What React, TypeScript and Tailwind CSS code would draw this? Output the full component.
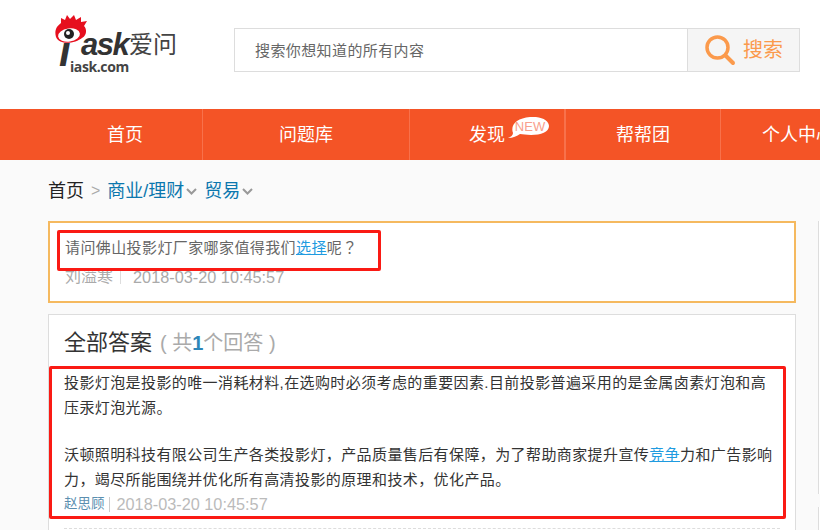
const cjk = "font-['Liberation_Sans','Noto_Sans_CJK_SC',sans-serif]"

const Logo = () => (
  <div className="relative h-[62px] w-[125px] shrink-0">
    <svg width="34" height="30" viewBox="0 0 34 30" className="absolute left-0 top-[1px]">
      <path d="M1 22C-1 15 2 11 6 8L6 3l4 2 2-5 3 4 4-4 2 5 5-3 0 5 6-1-3 5c3 3 3 9-2 12-6 5-22 8-26-1z" fill="#e60f1e" />
      <ellipse cx="14" cy="20" rx="11" ry="6.5" fill="#fff" transform="rotate(-8 14 20)" />
      <circle cx="14" cy="19" r="5" fill="#222" />
      <circle cx="13" cy="18" r="2" fill="#fff" />
    </svg>
    <span className="absolute left-[4px] top-[14px] text-[42px] leading-[48px] font-bold italic text-[#333] font-['Liberation_Sans',sans-serif]">
      ı
    </span>
    <span className="absolute left-[26px] top-[13px] text-[31px] leading-[36px] font-bold italic text-[#333] font-['Liberation_Sans',sans-serif] tracking-[-1.5px]">
      ask
    </span>
    <span className="absolute left-[74px] top-[14px] text-[24px] leading-[30px] text-[#444] font-['Noto_Sans_CJK_SC',sans-serif]">
      爱问
    </span>
    <span className="absolute left-[15px] top-[44px] text-[14px] leading-[18px] font-bold text-[#444] font-['Open_Sans',sans-serif] tracking-[-0.4px]">
      iask.com
    </span>
  </div>
)

const SearchBar = () => (
  <div className="ml-[54px] mt-[14px] flex h-[44px] w-[566px] border border-[#ddd] bg-white">
    <div className="flex-1 pl-[20px] text-[15px] leading-[44px] tracking-[0.4px] text-[#666]">搜索你想知道的所有内容</div>
    <div className="flex w-[112px] items-center border-l border-[#ddd] bg-[#f5f5f5] pl-[16px]">
      <svg width="32" height="32" viewBox="0 0 32 32" fill="none" stroke="#fb9a4c">
        <circle cx="13.5" cy="13.5" r="10.5" strokeWidth="3.5" />
        <path d="M21.5 21.5L29 29" strokeWidth="4" strokeLinecap="round" />
      </svg>
      <span className="ml-[7px] text-[20px] text-[#fb9a4c]">搜索</span>
    </div>
  </div>
)

const Nav = () => (
  <div className="flex h-[51px] bg-[#f45426] pl-[48px] text-[18px] whitespace-nowrap text-white">
    <div className="flex w-[155px] shrink-0 items-center justify-center border-r border-[#f8714b] pt-[2px]">首页</div>
    <div className="flex w-[207px] shrink-0 items-center justify-center border-r border-[#f8714b] pt-[2px]">问题库</div>
    <div className="relative flex w-[156px] shrink-0 items-center justify-center border-r-2 border-[#f8714b] pt-[2px]">
      发现
      <svg width="42" height="23" viewBox="0 0 42 23" className="absolute left-[98px] top-[8px]">
        <path d="M0 21c3-1 5-3 5-5C2 8 9 1 22 0c12-1 19 4 19 9 0 6-8 9-18 9-5 0-8-1-11-1-3 2-7 4-12 4z" fill="#fff" />
        <text x="22" y="14" textAnchor="middle" fontSize="13" fill="#f9a08c" fontFamily="Liberation Sans">NEW</text>
      </svg>
    </div>
    <div className="flex w-[155px] shrink-0 items-center justify-center border-r border-[#f8714b] pt-[2px]">帮帮团</div>
    <div className="flex shrink-0 items-center pl-[41px] pt-[2px]">个人中心</div>
  </div>
)

const Chevron = () => (
  <svg width="11" height="7" viewBox="0 0 11 7" fill="none" stroke="#999" strokeWidth="2" className="mx-[2px] mt-[1px]">
    <path d="M1 1l4.5 4.5L10 1" />
  </svg>
)

export default function App() {
  return (
    <div className={`relative h-[530px] w-[820px] overflow-hidden bg-[#fafafa] ${cjk}`}>
      <div className="flex h-[109px] bg-white pl-[55px] pt-[14px]">
        <Logo />
        <SearchBar />
      </div>
      <Nav />

      <div className="flex h-[61px] items-center pl-[48px] pt-[1px] text-[18px] text-[#0b77ae]">
        <span className="text-[#222]">首页</span>
        <span className="mx-[7px] text-[16px] text-[#aaa]">&gt;</span>
        <span>商业/理财</span>
        <Chevron />
        <span className="ml-[5px]">贸易</span>
        <Chevron />
      </div>

      <div className="ml-[48px] h-[82px] w-[748px] border-2 border-[#f5b95f] bg-white px-[15px] pt-[13px]">
        <p className="text-[15px] leading-[22px] tracking-[0.4px] whitespace-nowrap text-[#666]">
          请问佛山投影灯厂家哪家值得我们<a className="text-[#1f9be0] underline">选择</a>呢<span className="font-['Noto_Sans_CJK_TC',sans-serif]">？</span>
        </p>
        <p className="mt-[7px] flex items-center text-[16.3px] leading-[22px] whitespace-nowrap text-[#aaa]">
          <span className="text-[16px]">刘溢寒</span>
          <span className="mx-[7px] h-[13px] w-px bg-[#ddd]" />
          <span className="ml-[5px]">2018-03-20 10:45:57</span>
        </p>
      </div>

      <div className="ml-[48px] mt-[11px] h-[230px] w-[748px] border border-[#ddd] bg-white px-[15px]">
        <div className="flex h-[55px] items-center pt-[2px] pb-[2px] text-[22px] whitespace-nowrap text-[#333]">
          全部答案
          <span className="ml-[8px] text-[20px] text-[#aaa]">
            ( 共<span className="font-bold text-[#2e86b8]">1</span>个回答 )
          </span>
        </div>
        <div className="text-[15px] leading-[25px] tracking-[0.4px] whitespace-nowrap text-[#333]">
          <p>
            投影灯泡是投影的唯一消耗材料,在选购时必须考虑的重要因素.目前投影普遍采用的是金属卤素灯泡和高
            <br />
            压汞灯泡光源。
          </p>
          <p className="mt-[22px]">
            沃顿照明科技有限公司生产各类投影灯，产品质量售后有保障，为了帮助商家提升宣传<a className="text-[#1f9be0] underline">竞争</a>力和广告影响
            <br />
            力，竭尽所能围绕并优化所有高清投影的原理和技术，优化产品。
          </p>
        </div>
        <p className="flex items-center text-[16.3px] leading-[24px] whitespace-nowrap text-[#bbb]">
          <span className="text-[13.5px] text-[#5b8fb0]">赵思顾</span>
          <span className="mx-[4px] h-[15px] w-px bg-[#ccc]" />
          <span className="ml-[3px]">2018-03-20 10:45:57</span>
        </p>
        <div className="mt-[12px] border-t border-dashed border-[#ddd]" />
      </div>

      {/* annotation boxes drawn on top of the page */}
      <div className="absolute left-[57px] top-[230px] h-[41px] w-[324px] rounded-[2px] border-[3px] border-[#fa1a14]" />
      <div className="absolute left-[49px] top-[366px] h-[153px] w-[737px] rounded-[2px] border-[3px] border-[#fa1a14]" />
      <div className="absolute left-[818px] top-[221px] h-[273px] w-[2px] border-l border-[#ddd] bg-white" />
      <div className="absolute left-[818px] top-[507px] h-[23px] w-[2px] border-l border-[#ddd] bg-white" />
    </div>
  )
}
